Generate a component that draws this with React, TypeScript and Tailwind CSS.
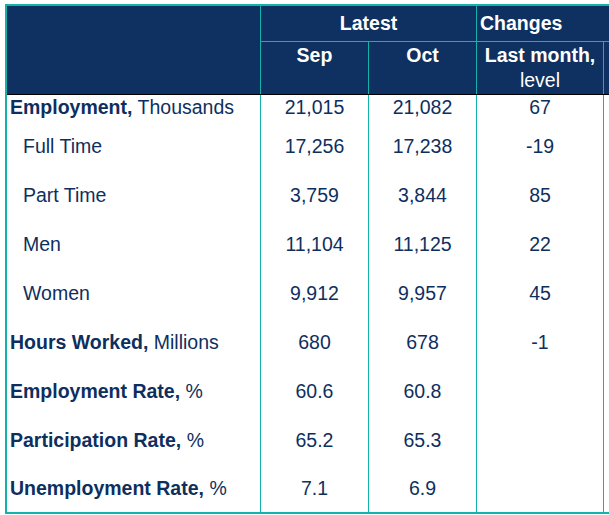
import React from 'react';

interface Row {
    label: string;
    unit?: string;
    sub?: boolean;
    sep: string;
    oct: string;
    change: string;
    height: string;
    align: string;
}

const rows: Row[] = [
    { label: 'Employment', unit: 'Thousands', sep: '21,015', oct: '21,082', change: '67', height: 'h-[27px]', align: 'items-start' },
    { label: 'Full Time', sub: true, sep: '17,256', oct: '17,238', change: '-19', height: 'h-[49px]', align: 'items-center' },
    { label: 'Part Time', sub: true, sep: '3,759', oct: '3,844', change: '85', height: 'h-[49px]', align: 'items-center' },
    { label: 'Men', sub: true, sep: '11,104', oct: '11,125', change: '22', height: 'h-[49px]', align: 'items-center' },
    { label: 'Women', sub: true, sep: '9,912', oct: '9,957', change: '45', height: 'h-[49px]', align: 'items-center' },
    { label: 'Hours Worked', unit: 'Millions', sep: '680', oct: '678', change: '-1', height: 'h-[49px]', align: 'items-center' },
    { label: 'Employment Rate', unit: '%', sep: '60.6', oct: '60.8', change: '', height: 'h-[49px]', align: 'items-center' },
    { label: 'Participation Rate', unit: '%', sep: '65.2', oct: '65.3', change: '', height: 'h-[48px]', align: 'items-center' },
    { label: 'Unemployment Rate', unit: '%', sep: '7.1', oct: '6.9', change: '', height: 'h-[48px]', align: 'items-center' }
];

const App: React.FC = () => {
    return (
        <div className="w-[609px] h-[515px] bg-white pt-[4px] pl-[5px] font-['Liberation_Sans',Arial,sans-serif] text-[19.5px] leading-[25px] text-[#0e2f5e]">
            <div className="w-[604px] border-t-2 border-l-2 border-b-2 border-[#14b2aa]">
                {/* header */}
                <div className="flex h-[89px] bg-[#0e3161] border-b border-black text-white font-bold">
                    <div className="w-[254px] border-r border-[#14b2aa]" />
                    <div className="flex-1 flex flex-col">
                        <div className="flex h-[36px] border-b border-[#14b2aa]">
                            <div className="w-[216px] border-r border-[#14b2aa] flex items-center justify-center">Latest</div>
                            <div className="flex-1 flex items-center pl-[3px]">Changes</div>
                        </div>
                        <div className="flex flex-1">
                            <div className="w-[108px] border-r border-[#14b2aa] text-center pt-[1px]">Sep</div>
                            <div className="w-[108px] border-r border-[#14b2aa] text-center pt-[1px]">Oct</div>
                            <div className="w-[127px] border-r border-[#14b2aa] text-center pt-[1px]">
                                <div>Last month,</div>
                                <div className="font-normal">level</div>
                            </div>
                            <div className="flex-1" />
                        </div>
                    </div>
                </div>

                {/* body */}
                {rows.map((row) => (
                    <div key={row.label} className={`flex ${row.height}`}>
                        <div className={`w-[254px] h-full flex ${row.align} border-r border-[#14b2aa] ${row.sub ? 'pl-[16px]' : 'pl-[3px]'}`}>
                            {row.sub ? (
                                <span>{row.label}</span>
                            ) : (
                                <span><span className="font-bold">{row.label},</span> {row.unit}</span>
                            )}
                        </div>
                        <div className={`w-[108px] h-full flex justify-center ${row.align} border-r border-[#14b2aa]`}>{row.sep}</div>
                        <div className={`w-[108px] h-full flex justify-center ${row.align} border-r border-[#14b2aa]`}>{row.oct}</div>
                        <div className={`w-[127px] h-full flex justify-center ${row.align} border-r border-[#14b2aa]`}>{row.change}</div>
                        <div className="flex-1" />
                    </div>
                ))}
            </div>
        </div>
    );
};

export default App;
